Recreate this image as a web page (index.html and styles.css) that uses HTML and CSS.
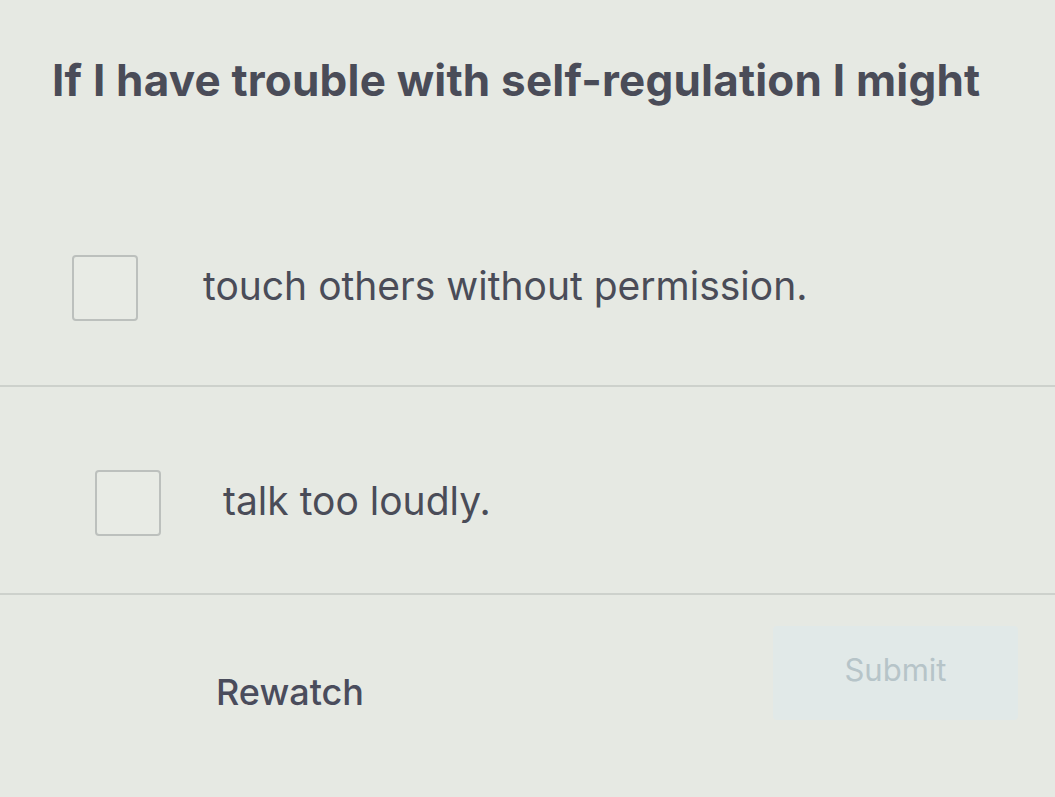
FILE: index.html
```html
<!DOCTYPE html>
<html>
<head>
<meta charset="utf-8">
<link rel="stylesheet" href="styles.css">
</head>
<body>
<div class="page">
  <h1 class="question">If I have trouble with self-regulation I might</h1>
  <div class="options">
    <label class="option first">
      <span class="box"></span>
      <span class="label">touch others without permission.</span>
    </label>
    <label class="option second">
      <span class="box"></span>
      <span class="label">talk too loudly.</span>
    </label>
  </div>
  <div class="actions">
    <span class="rewatch">Rewatch</span>
    <span class="submit">Submit</span>
  </div>
</div>
</body>
</html>
```
FILE: styles.css
```css
html, body {
  margin: 0;
  padding: 0;
}
body {
  background: #e6e9e3;
  font-family: "Inter", "Liberation Sans", sans-serif;
  color: #4b4e5a;
  width: 1055px;
  height: 797px;
  overflow: hidden;
}
.page {
  padding-top: 52px;
}
.question {
  margin: 0 0 0 52px;
  font-size: 44px;
  font-weight: 700;
  line-height: 56px;
  color: #4a4c58;
  letter-spacing: 0.2px;
  white-space: nowrap;
}
.options {
  margin-top: 147px;
}
.option {
  display: flex;
  align-items: flex-start;
  border-bottom: 2px solid #cdd1cc;
  box-sizing: border-box;
}
.option.first {
  padding-left: 72px;
  height: 132px;
}
.option.second {
  padding-left: 95px;
  padding-top: 83px;
  height: 208px;
}
.box {
  width: 62px;
  height: 62px;
  border: 2px solid #bcc0bd;
  border-radius: 4px;
  flex: none;
  background: #e8ebe5;
}
.label {
  font-size: 39px;
  font-weight: 400;
  color: #4a4c58;
  line-height: 62px;
}
.first .label { margin-left: 65px; }
.second .label { margin-left: 62px; }
.actions {
  display: flex;
  align-items: flex-start;
  justify-content: space-between;
  padding: 31px 37px 0 216px;
}
.rewatch {
  font-size: 36px;
  font-weight: 500;
  color: #4a4c5c;
  margin-top: 44px;
}
.submit {
  width: 245px;
  height: 94px;
  background: #e1e9e8;
  border-radius: 4px;
  color: #b6c4c8;
  font-size: 31px;
  display: flex;
  align-items: center;
  justify-content: center;
  padding-bottom: 8px;
  box-sizing: border-box;
}
```
